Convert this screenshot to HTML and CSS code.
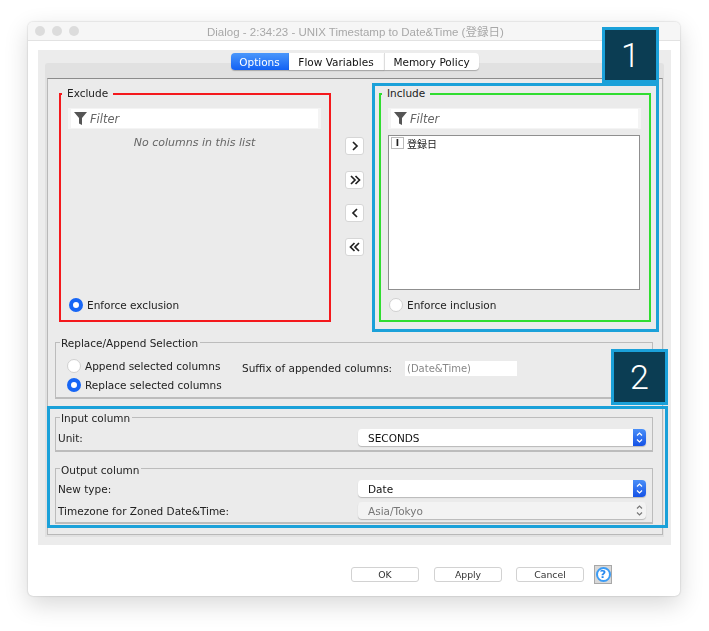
FILE: index.html
```html
<!DOCTYPE html>
<html lang="en">
<head>
    <meta charset="UTF-8">
    <meta name="viewport" content="width=device-width, initial-scale=1.0">
    <title>Dialog - UNIX Timestamp to Date&amp;Time</title>
    <link rel="stylesheet" href="styles.css">
</head>
<body>

    <div class="window">
        <div class="titlebar">
            <span class="light"></span>
            <span class="light"></span>
            <span class="light"></span>
            <span class="title">Dialog - 2:34:23 - UNIX Timestamp to Date&amp;Time (登録日)</span>
        </div>

        <div class="panel">
            <div class="tabs">
                <span class="tab active">Options</span>
                <span class="tab tab-flow">Flow Variables</span>
                <span class="tab tab-memory">Memory Policy</span>
            </div>

            <div class="pane">
                <div class="pane-inner">
                    <div class="columns">
                        <div class="picker exclude">
                            <span class="legend">Exclude</span>
                            <div class="filter">
                                <svg class="funnel" viewBox="0 0 13 13"><path d="M0 0H13L8 6V13L5 11.5V6Z"/></svg>
                                <span>Filter</span>
                            </div>
                            <p class="empty">No columns in this list</p>
                            <label class="radio-row enforce"><span class="radio on"></span>Enforce exclusion</label>
                        </div>

                        <div class="movers">
                            <button class="mover"><svg viewBox="0 0 12 12"><path d="M4 2L8 6L4 10"/></svg></button>
                            <button class="mover"><svg viewBox="0 0 12 12"><path d="M2 2L6 6L2 10M6.500 2L10.500 6L6.500 10"/></svg></button>
                            <button class="mover"><svg viewBox="0 0 12 12"><path d="M8 2L4 6L8 10"/></svg></button>
                            <button class="mover"><svg viewBox="0 0 12 12"><path d="M5.500 2L1.500 6L5.500 10M10 2L6 6L10 10"/></svg></button>
                        </div>

                        <div class="picker include">
                            <span class="legend">Include</span>
                            <div class="filter">
                                <svg class="funnel" viewBox="0 0 13 13"><path d="M0 0H13L8 6V13L5 11.5V6Z"/></svg>
                                <span>Filter</span>
                            </div>
                            <div class="list">
                                <div class="list-row"><span class="type-icon">I</span>登録日</div>
                            </div>
                            <label class="radio-row enforce"><span class="radio"></span>Enforce inclusion</label>
                        </div>
                    </div>

                    <div class="group replace">
                        <span class="legend">Replace/Append Selection</span>
                        <div class="replace-body">
                            <div class="replace-radios">
                                <label class="radio-row"><span class="radio"></span>Append selected columns</label>
                                <label class="radio-row"><span class="radio on"></span>Replace selected columns</label>
                            </div>
                            <span class="suffix-label">Suffix of appended columns:</span>
                            <span class="suffix-field">(Date&amp;Time)</span>
                        </div>
                    </div>

                    <div class="group input-col">
                        <span class="legend">Input column</span>
                        <div class="field-row">
                            <span>Unit:</span>
                            <div class="combo">SECONDS
                                <span class="combo-arrows"><svg viewBox="0 0 13 17"><path d="M4 6.500L6.500 4L9 6.500M4 10.500L6.500 13L9 10.500"/></svg></span>
                            </div>
                        </div>
                    </div>

                    <div class="group output-col">
                        <span class="legend">Output column</span>
                        <div class="field-row">
                            <span>New type:</span>
                            <div class="combo">Date
                                <span class="combo-arrows"><svg viewBox="0 0 13 17"><path d="M4 6.500L6.500 4L9 6.500M4 10.500L6.500 13L9 10.500"/></svg></span>
                            </div>
                        </div>
                        <div class="field-row">
                            <span>Timezone for Zoned Date&amp;Time:</span>
                            <div class="combo disabled">Asia/Tokyo
                                <span class="combo-arrows"><svg viewBox="0 0 13 17"><path d="M4 6.500L6.500 4L9 6.500M4 10.500L6.500 13L9 10.500"/></svg></span>
                            </div>
                        </div>
                    </div>
                </div>
            </div>
        </div>

        <div class="footer">
            <button class="btn btn-ok">OK</button>
            <button class="btn">Apply</button>
            <button class="btn">Cancel</button>
            <span class="help"><span class="help-mark">?</span></span>
        </div>

        <!-- callouts drawn over the screenshot -->
        <div class="callout callout-one"></div>
        <div class="badge badge-one">1</div>
        <div class="callout callout-two"></div>
        <div class="badge badge-two">2</div>
    </div>

</body>
</html>
```

FILE: styles.css
```css
* {
    box-sizing: border-box;
}

html, body {
    height: 631px;
    overflow: hidden;
}

body {
    margin: 0;
    padding: 22px 29px 0 28px;
    background-color: #fff;
    font-family: "DejaVu Sans", "Noto Sans CJK JP", sans-serif;
    font-size: 10.500px;
    color: #222;
}

.window {
    position: relative;
    width: 652px;
    height: 574px;
    background-color: #fff;
    border-radius: 5px;
    box-shadow: 0 0 2px rgba(0, 0, 0, 0.25), 0 8px 24px rgba(0, 0, 0, 0.16);
    filter: blur(0.3px); /* the original capture is slightly soft */
}

/* title bar */
.titlebar {
    display: flex;
    align-items: center;
    gap: 7px;
    height: 19px;
    padding-left: 7px;
    background-color: #f6f6f6;
    border-bottom: 1px solid #e2e2e2;
    border-radius: 5px 5px 0 0;
}

.light {
    width: 10px;
    height: 10px;
    border-radius: 50%;
    background-color: #dcdcdc;
}

.title {
    margin-left: 121px;
    font-family: "Liberation Sans", "Noto Sans CJK JP", sans-serif;
    font-size: 11.500px;
    color: #a8a8a8;
}

/* gray panel with the tabs */
.panel {
    height: 495px;
    margin: 9px 9px 0 10px;
    padding: 3px 7px 0;
    background-color: #ececec;
}

.tabs {
    position: relative;
    display: flex;
    justify-content: center;
    height: 17px;
    margin-bottom: -7px;
}

.tab {
    display: flex;
    align-items: center;
    justify-content: center;
    width: 95px;
    background-color: #fff;
    color: #111;
    box-shadow: 0 1px 1px rgba(0, 0, 0, 0.25);
}

.tab.active {
    width: 58px;
    color: #fff;
    background: linear-gradient(#4a97fb, #1261f4);
    border-radius: 4px 0 0 4px;
}

.tab-memory {
    border-left: 1px solid #ddd;
    border-radius: 0 4px 4px 0;
}

.pane {
    height: 474px;
    padding: 15px 1px 0 2px;
    background-color: #e1e1e1;
    border-radius: 3px 3px 0 0;
}

.pane-inner {
    height: 457px;
    padding: 14px 10px 0 11px;
    background-color: #ebebeb;
    border: 1px solid #b8b8b8;
    border-top-color: #8c8c8c;
}

/* exclude / include columns */
.columns {
    display: flex;
    height: 229px;
}

.picker {
    display: flex;
    flex-direction: column;
    width: 272px;
    padding: 0 8px 8px 7px;
    border: 2px solid;
}

.exclude {
    border-color: #f4181c;
}

.include {
    border-color: #30dd30;
}

.legend {
    display: block;
    width: fit-content;
    height: 14px;
    line-height: 14px;
    background-color: #ebebeb;
    color: #222;
}

.picker .legend {
    margin: -9px 0 8px -6px;
    padding: 0 5px;
}

.filter {
    display: flex;
    align-items: center;
    gap: 3px;
    height: 21px;
    padding-left: 3px;
    background-color: #fff;
    border: 1px solid #f4f4f4;
    border-width: 1px 3px;
    font-size: 11.500px;
    font-style: italic;
    color: #666;
}

.funnel {
    width: 13px;
    height: 13px;
    fill: #555;
}

.empty {
    margin: 7px 0 0;
    text-align: center;
    font-size: 11px;
    font-style: italic;
    color: #666;
}

.enforce {
    margin-top: auto;
    margin-left: 1px;
}

.radio-row {
    display: flex;
    align-items: center;
    gap: 4px;
    height: 14px;
}

.radio {
    display: block;
    width: 14px;
    height: 14px;
    background-color: #fff;
    border: 1px solid #cfcfcf;
    border-radius: 50%;
}

.radio.on {
    background-color: #fff;
    border: 4.500px solid #1766f5;
}

.movers {
    display: flex;
    flex-direction: column;
    align-items: center;
    gap: 15.670px;
    width: 48px;
    padding: 44px 1px 0 0;
}

.mover {
    display: flex;
    align-items: center;
    justify-content: center;
    width: 19px;
    height: 18px;
    padding: 0;
    background-color: #fff;
    border: 1px solid #d6d6d6;
    border-radius: 3px;
}

.mover svg {
    width: 12px;
    height: 12px;
    fill: none;
    stroke: #222;
    stroke-width: 1.700;
}

.list {
    flex: 1;
    margin: 6px 1px 8px 0;
    padding: 1px 2px;
    background-color: #fff;
    border: 1px solid #8f8f8f;
}

.list-row {
    display: flex;
    align-items: center;
    gap: 3px;
    height: 12px;
    font-size: 10px;
}

.type-icon {
    display: flex;
    align-items: center;
    justify-content: center;
    width: 13px;
    height: 12px;
    font-size: 9px;
    font-weight: bold;
    border: 1px solid #bbb;
}

/* titled groups */
.group {
    width: 598px;
    margin-left: -4px;
    padding: 0 6px 0 2px;
    border: 1px solid #bcbcbc;
    border-bottom-width: 2px;
}

.group .legend {
    margin: -7px 0 0 2px;
    padding: 0 2px 0 1px;
}

.replace {
    height: 57px;
    margin-top: 20px;
}

.replace-body {
    display: flex;
    align-items: flex-start;
    margin: 9px 0 0 9px;
}

.replace-radios {
    display: flex;
    flex-direction: column;
    gap: 5px;
    width: 175px;
}

.suffix-label {
    width: 163px;
    height: 15px;
    margin-top: 2px;
    line-height: 15px;
}

.suffix-field {
    width: 112px;
    height: 15px;
    margin-top: 2px;
    line-height: 15px;
    padding-left: 2px;
    background-color: #fff;
    color: #888;
    font-size: 10px;
}

.input-col {
    height: 35px;
    margin-top: 18px;
}

.output-col {
    height: 56px;
    margin-top: 16px;
}

.field-row {
    display: flex;
    align-items: center;
    justify-content: space-between;
    height: 17px;
    margin-bottom: 5px;
}

.input-col .field-row {
    margin-top: 4px;
}

.output-col .legend {
    margin: -6px 0 3px 2px;
}

.combo {
    display: flex;
    align-items: center;
    justify-content: space-between;
    width: 288px;
    height: 17px;
    padding-left: 10px;
    background-color: #fff;
    border-radius: 4px;
    color: #111;
    box-shadow: 0 1px 1px rgba(0, 0, 0, 0.22);
}

.combo-arrows {
    display: block;
    width: 13px;
    height: 17px;
    background: linear-gradient(#4a8ff8, #1552e6);
    border-radius: 0 4px 4px 0;
}

.combo-arrows svg {
    display: block;
    fill: none;
    stroke: #fff;
    stroke-width: 1.200;
}

.combo.disabled {
    background-color: #f3f3f3;
    color: #777;
}

.combo.disabled .combo-arrows {
    background: none;
}

.combo.disabled .combo-arrows svg {
    stroke: #777;
}

/* bottom buttons */
.footer {
    display: flex;
    align-items: center;
    gap: 14px;
    padding: 20px 0 0 323px;
}

.btn {
    width: 68px;
    height: 15px;
    padding: 0;
    background-color: #fff;
    border: 1px solid #d2d2d2;
    border-radius: 3px;
    font-family: "DejaVu Sans", sans-serif;
    font-size: 9.300px;
    color: #333;
}

.btn-ok {
    margin-right: 1px;
}

.help {
    display: flex;
    align-items: center;
    justify-content: center;
    width: 18px;
    height: 19px;
    margin-left: -4px;
    background-color: #d8d8d8;
    border: 1px solid #a8a8a8;
}

.help-mark {
    width: 15px;
    height: 15px;
    line-height: 11px;
    text-align: center;
    background-color: #fff;
    border: 2px solid #3b9cf5;
    border-radius: 50%;
    font-size: 11px;
    font-weight: bold;
    color: #2487ee;
}

/* callouts */
.callout {
    position: absolute;
    border: 3.500px solid #1ba1d9;
}

.callout-one {
    left: 344px;
    top: 61px;
    width: 287px;
    height: 249px;
}

.callout-two {
    left: 19px;
    top: 384px;
    width: 621px;
    height: 122px;
}

.badge {
    position: absolute;
    width: 57px;
    height: 56px;
    line-height: 50px;
    text-align: center;
    background-color: #0b3d53;
    border: 3px solid #1ba1d9;
    font-family: Roboto, sans-serif;
    font-size: 34px;
    font-weight: 300;
    color: #fff;
}

.badge-one {
    left: 574px;
    top: 5px;
}

.badge-two {
    left: 583px;
    top: 327px;
}
```
